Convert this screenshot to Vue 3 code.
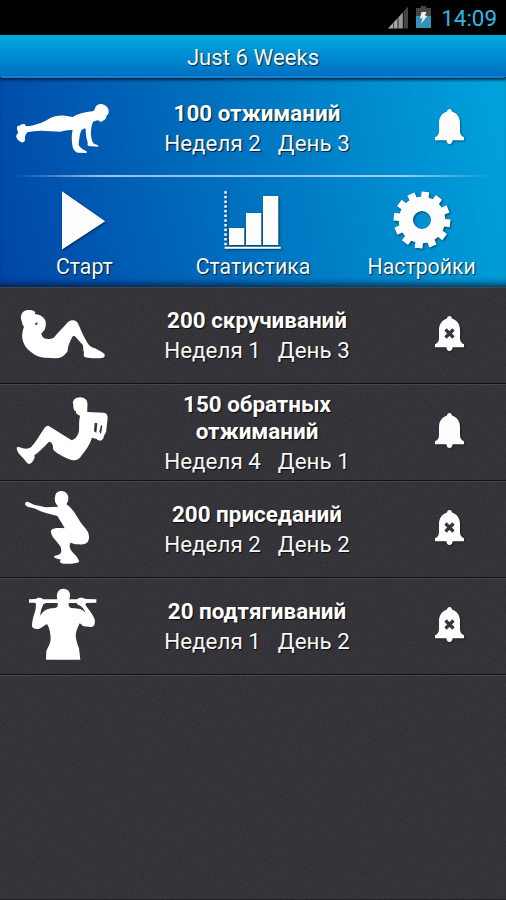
<script setup>
const silhouettes = {
  pushup:
    'M271 27C285 26 297 38 296 50C296 57 293 60 290 61C289 69 287 73 283 74L274 81C269 79 265 76 262 76L249 80C244 93 242 108 243 120C244 132 247 143 253 147L265 151L264 155L236 153C231 152 233 146 233 142C229 130 227 118 227 102L224 100L214 106C209 118 207 134 206 151C211 160 222 165 231 170L229 174L203 173C194 170 188 160 187 150C185 136 184 120 188 105C175 104 163 107 152 110L106 108C88 106 66 109 52 112C48 116 47 121 45 125L45 135C42 143 37 144 33 141C27 138 20 132 19 126C18 120 20 117 25 114C22 107 19 100 22 94C25 90 28 94 31 91C34 87 38 88 41 87C47 87 46 92 48 94L64 92C83 87 98 83 111 75C125 65 145 61 165 62L188 66C201 58 213 55 227 52C239 49 247 51 253 46C255 34 262 28 271 27Z',
  crunch:
    'M42 34C50 28 66 29 73 34C77 37 76 40 74 43C90 43 103 51 107 65C109 79 105 91 96 98L94 102C96 112 104 118 118 117C130 117 134 111 140 103L166 75C173 67 180 61 188 61C197 61 203 66 205 73C212 88 222 113 232 128C237 137 244 141 255 145L274 155C284 160 286 165 283 170C278 176 265 174 252 175C243 175 234 174 226 172C221 171 220 164 222 158C219 150 220 143 219 136L194 108L188 109C180 124 175 137 173 148C174 154 172 157 169 158C161 170 150 175 137 175L105 173C86 172 73 164 62 155C48 145 40 131 37 116C35 104 38 91 42 80C36 75 37 66 34 60C31 50 34 39 42 34ZM75 71C79 66 83 67 83 70C81 76 76 77 75 71Z',
  dips:
    'M201 29C212 25 227 29 231 39C234 50 231 62 232 72L282 74C290 75 293 81 293 89L289 126C288 139 280 142 281 149C276 160 266 160 260 153L246 149C240 170 227 187 215 202C207 216 196 220 182 215C164 210 145 199 131 187C127 180 132 169 121 162L117 161C103 176 88 191 73 202L74 208C71 217 65 228 57 228C48 225 45 214 36 207C27 199 20 188 20 180C22 174 29 178 34 179C43 182 54 184 63 178C77 164 88 143 101 124C107 114 113 111 120 116L185 157C196 154 204 143 207 129C208 116 206 99 210 83C200 80 197 75 198 70C190 67 190 59 190 50C187 41 190 33 201 29ZM254 104L252 130L259 134L262 106ZM273 112L268 131L273 138L277 113Z',
  squat:
    'M136 27C148 25 160 34 160 47C160 57 157 63 154 67C163 72 173 83 181 95C190 111 201 128 211 139C221 150 224 163 221 173C217 187 204 188 188 187C177 187 168 182 166 182C161 193 165 205 177 215C186 223 193 234 192 240C184 245 164 246 151 245C140 246 133 242 135 236L139 233C129 231 120 229 117 225C117 219 126 222 135 216C141 209 139 201 136 193L121 174C111 165 105 149 109 144C116 137 132 137 149 139C143 127 134 113 127 102C103 96 82 91 61 80C49 76 37 77 31 69C28 61 36 57 41 61L57 68L92 76L130 74C124 67 117 60 120 46C120 35 126 29 136 27Z',
  pullup:
    'M130 20C144 20 152 31 150 43L148 52L171 52C176 45 190 46 196 51L229 52L229 62L199 63L196 68C204 81 218 95 224 112C227 127 221 136 212 135L192 133C186 131 184 127 179 124C173 135 168 149 167 160C168 174 172 187 177 199L181 233L78 233L79 207C84 195 92 183 92 171C92 153 88 137 81 126C72 130 66 137 58 140C49 143 38 141 36 133C35 116 43 98 47 82L48 66L45 62L27 62L27 52L47 51C54 45 64 46 70 52L112 52C107 33 116 20 130 20ZM113 63L78 63L70 67C66 76 61 87 61 101C69 87 81 80 95 79C106 78 115 79 113 63ZM146 63C145 79 153 78 166 79C179 80 190 83 197 94C194 81 185 72 174 68L169 63Z',
}

const active = { title: '100 отжиманий', week: 2, day: 3, icon: 'pushup', shift: 'translate(0 45)', alarm: true }

const rows = [
  { title: '200 скручиваний', week: 1, day: 3, icon: 'crunch', shift: 'translate(0 39)', alarm: false },
  { title: '150 обратных отжиманий', week: 4, day: 1, icon: 'dips', shift: 'translate(0 12)', alarm: true },
  { title: '200 приседаний', week: 2, day: 2, icon: 'squat', shift: 'translate(15 3)', alarm: false },
  { title: '20 подтягиваний', week: 1, day: 2, icon: 'pullup', shift: 'translate(30 12)', alarm: false },
]

const bell =
  'M14.5 0C16 0 16.8 1 17 2.6C22 4.2 25 8.5 25 14V22C25 25 26 27 29 28.2V31.3H17.6C17.5 33.5 16.3 35 14.5 35S11.5 33.5 11.4 31.3H0V28.2C3 27 4 25 4 22V14C4 8.5 7 4.2 12 2.6C12.2 1 13 0 14.5 0Z'

const dots = Array.from({ length: 12 }, (_, i) => 1.2 + i * 4.68)

function gearPath() {
  const pt = (r, deg) => {
    const a = (deg * Math.PI) / 180
    return `${(30 + r * Math.cos(a)).toFixed(2)} ${(30 + r * Math.sin(a)).toFixed(2)}`
  }
  const points = []
  for (let i = 0; i < 12; i++) {
    const c = 7 + i * 30
    points.push(pt(23.3, c - 9.5), pt(28.6, c - 7.8), pt(28.6, c + 7.8), pt(23.3, c + 9.5))
  }
  return `M${points.join('L')}ZM39 30A9 9 0 1 0 21 30A9 9 0 1 0 39 30Z`
}
const gear = gearPath()
</script>

<template>
  <div class="screen">
    <header class="status">
      <svg class="signal" width="21" height="23" viewBox="0 0 21 23">
        <path d="M0 22.6L5 17V22.6Z" fill="#aaa" />
        <path d="M5.6 16.4L9.6 12V22.6H5.6Z" fill="#a4a4a4" />
        <path d="M10.4 11.2L14.8 6.4V22.6H10.4Z" fill="#999" />
        <path d="M15.6 5.4L20 .4V22.6H15.6Z" fill="#444" />
      </svg>
      <svg class="battery" width="15" height="22" viewBox="0 0 15 22">
        <path d="M4.7 0H10.3V2H15V10H0V2H4.7Z" fill="#444" />
        <path d="M0 10H15V22H0Z" fill="#3492b8" />
        <path d="M5.5 6H10.5L8.8 9.8H11.3L5 18L6.6 12.3H4Z" fill="#eee" />
      </svg>
      <span class="clock">14:09</span>
    </header>

    <h1 class="title">Just 6 Weeks</h1>

    <section class="active">
      <div class="row current">
        <svg class="figure" viewBox="0 0 315 291">
          <path :d="silhouettes[active.icon]" :transform="active.shift" fill="#fff" fill-rule="evenodd" />
        </svg>
        <div class="info">
          <div class="name">{{ active.title }}</div>
          <div class="when">
            <span>Неделя {{ active.week }}</span>
            <span>День {{ active.day }}</span>
          </div>
        </div>
        <svg class="bell" viewBox="0 0 29 39"><path :d="bell" fill="#fdfdfd" /></svg>
      </div>
      <div class="rule"></div>
      <nav class="menu">
        <div class="item">
          <svg class="glyph" viewBox="0 0 60 60"><path d="M8 1.3L51.2 31.2L8 59.5Z" /></svg>
          <span>Старт</span>
        </div>
        <div class="item">
          <svg class="glyph" viewBox="0 0 60 60">
            <rect v-for="y in dots" :key="y" x="1.3" :y="y" width="2.5" height="2.5" />
            <path d="M6 38H21.3V55H6ZM23 23H38.3V55H23ZM40 6H55.3V55H40ZM1.6 56.7H57.7V58.8H1.6Z" />
          </svg>
          <span>Статистика</span>
        </div>
        <div class="item">
          <svg class="glyph" viewBox="0 0 60 60"><path :d="gear" fill-rule="evenodd" /></svg>
          <span>Настройки</span>
        </div>
      </nav>
    </section>

    <main class="list">
      <svg class="grain" width="506" height="614">
        <filter id="grain" x="0" y="0" width="100%" height="100%" color-interpolation-filters="sRGB">
          <feTurbulence type="fractalNoise" baseFrequency="0.45" numOctaves="2" seed="4" />
          <feColorMatrix type="saturate" values="0" />
          <feComponentTransfer><feFuncA type="linear" slope="0" intercept="1" /></feComponentTransfer>
        </filter>
        <rect width="506" height="614" filter="url(#grain)" />
      </svg>
      <div v-for="row in rows" :key="row.title" class="row">
        <svg class="figure" viewBox="0 0 315 291">
          <path :d="silhouettes[row.icon]" :transform="row.shift" fill="#fff" fill-rule="evenodd" />
        </svg>
        <div class="info">
          <div class="name">{{ row.title }}</div>
          <div class="when">
            <span>Неделя {{ row.week }}</span>
            <span>День {{ row.day }}</span>
          </div>
        </div>
        <svg class="bell" viewBox="0 0 29 39">
          <path :d="bell" fill="#fdfdfd" />
          <path v-if="!row.alarm" d="M10.5 13.5L18.5 21.5M18.5 13.5L10.5 21.5" stroke="#35343a" stroke-width="3.2" />
        </svg>
      </div>
      <div class="rest"></div>
    </main>
  </div>
</template>

<style>
body {
  background: #35343a;
}
</style>

<style scoped>
.screen {
  width: 506px;
  height: 900px;
  display: flex;
  flex-direction: column;
  overflow: hidden;
  font-family: Roboto, 'Liberation Sans', sans-serif;
  font-size: 22.4px;
  line-height: 27px;
  color: #f6f6f6;
}
.status {
  height: 35px;
  box-sizing: border-box;
  padding: 6px 9px 0 0;
  display: flex;
  justify-content: flex-end;
  align-items: flex-start;
  background: #000;
}
.battery {
  margin: 0 10px 0 7px;
}
.clock {
  font-size: 22.4px;
  line-height: 24px;
  color: #33b5e5;
}
.title {
  position: relative;
  margin: 0;
  height: 43px;
  box-sizing: border-box;
  padding-top: 9px;
  text-align: center;
  font-size: 22.2px;
  font-weight: 400;
  background: linear-gradient(#00aae0, #0070c2 95%, #1480d0 96%);
  border-radius: 0 0 3px 3px;
  box-shadow: 0 1px 3px 1px rgba(0, 20, 40, 0.8);
  text-shadow: 1px 1px 1px rgba(0, 0, 0, 0.7);
}
.active {
  height: 209px;
  background: linear-gradient(77deg, #0046a6, #0074c0 50%, #00a4de);
  box-shadow: inset 0 -8px 7px -5px rgba(0, 15, 40, 0.75);
}
.row {
  position: relative;
  height: 97px;
  box-sizing: border-box;
  padding-left: 10px;
  display: grid;
  grid-template-columns: 111px 1fr 113px;
  align-items: center;
  border-top: 1px solid #46454a;
  border-bottom: 1px solid #111114;
}
.row.current {
  height: 101px;
  padding-bottom: 1px;
  border-color: transparent;
}
.figure {
  width: 105px;
  height: 97px;
  margin: -1px 0;
}
.info {
  text-align: center;
  text-shadow: 1px 1px 1px rgba(0, 0, 0, 0.8);
}
.name {
  width: 230px;
  margin: 0 auto 3px;
  font-weight: 700;
  color: #fff;
}
.when {
  display: flex;
  justify-content: center;
  gap: 17px;
}
.bell {
  width: 29px;
  height: 39px;
  justify-self: center;
  filter: drop-shadow(1px 1px 1px rgba(0, 0, 0, 0.4));
}
.rule {
  height: 2px;
  margin: -4px 15px 0;
  background: linear-gradient(90deg, transparent, #9dbde6 18%, #a0cbee 82%, transparent);
}
.menu {
  padding-top: 13px;
  display: grid;
  grid-template-columns: repeat(3, 1fr);
}
.item {
  display: flex;
  flex-direction: column;
  align-items: center;
  gap: 3px;
  font-size: 21.3px;
  text-shadow: 1px 1px 1px rgba(0, 0, 0, 0.7);
}
.glyph {
  width: 60px;
  height: 60px;
  fill: #fdfdfd;
  filter: drop-shadow(1px 1px 1px rgba(0, 0, 0, 0.5));
}
.list {
  position: relative;
  flex: 1;
  display: flex;
  flex-direction: column;
  background: #302f35;
}
.grain {
  position: absolute;
  inset: 0;
  opacity: 0.06;
}
.rest {
  flex: 1;
  border-top: 1px solid #46454a;
  border-bottom: 1px solid #1c1c20;
}
</style>
